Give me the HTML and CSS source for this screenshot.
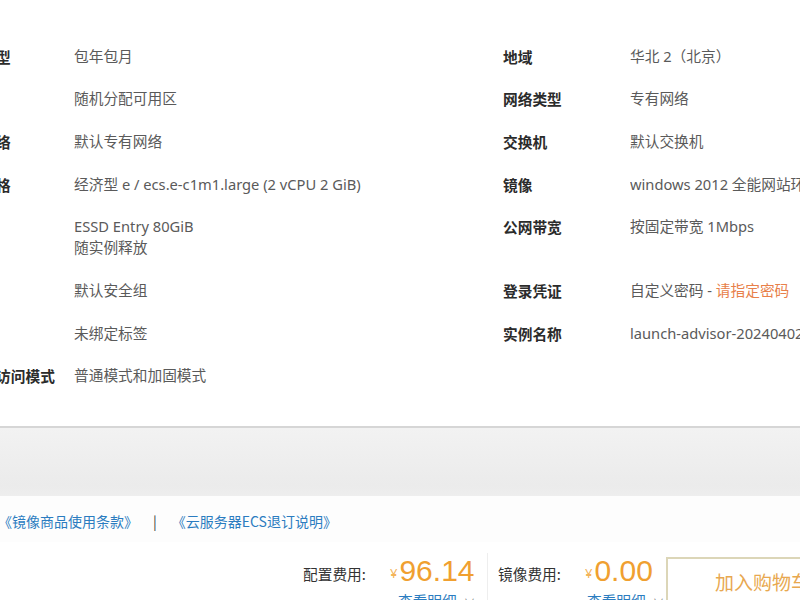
FILE: index.html
```html
<!DOCTYPE html>
<html lang="zh-CN">
<head>
<meta charset="utf-8">
<title>确认订单</title>
<link rel="stylesheet" href="styles.css">
</head>
<body>
<div class="page">
  <div class="info">
    <div class="label">付费类型</div><div class="value">包年包月</div>
    <div class="label">地域</div><div class="value">华北 2（北京）</div>

    <div class="label">可用区</div><div class="value">随机分配可用区</div>
    <div class="label">网络类型</div><div class="value">专有网络</div>

    <div class="label">专有网络</div><div class="value">默认专有网络</div>
    <div class="label">交换机</div><div class="value">默认交换机</div>

    <div class="label">实例规格</div><div class="value">经济型 e / ecs.e-c1m1.large (2 vCPU 2 GiB)</div>
    <div class="label">镜像</div><div class="value">windows 2012 全能网站环境(IIS/ASP/.NET/PHP)</div>

    <div class="label">系统盘</div><div class="value"><div class="line">ESSD Entry 80GiB</div><div class="line">随实例释放</div></div>
    <div class="label">公网带宽</div><div class="value">按固定带宽 1Mbps</div>

    <div class="label">安全组</div><div class="value">默认安全组</div>
    <div class="label">登录凭证</div><div class="value">自定义密码 - <span class="warn">请指定密码</span></div>

    <div class="label">标签</div><div class="value">未绑定标签</div>
    <div class="label">实例名称</div><div class="value">launch-advisor-20240402001</div>

    <div class="label">元数据访问模式</div><div class="value">普通模式和加固模式</div>
    <div class="label"></div><div class="value"></div>
  </div>

  <div class="band"></div>

  <div class="links">
    <a class="link">《镜像商品使用条款》</a>
    <span class="sep">|</span>
    <a class="link">《云服务器ECS退订说明》</a>
  </div>

  <div class="pricebar">
    <div class="fee-label">配置费用:</div>
    <div class="fee fee-cfg">
      <div class="amount"><span class="yen">¥</span>96.14</div>
      <div class="detail">查看明细 <span class="chev">∨</span></div>
    </div>
    <div class="divider"></div>
    <div class="fee-label">镜像费用:</div>
    <div class="fee fee-img">
      <div class="amount"><span class="yen">¥</span>0.00</div>
      <div class="detail">查看明细 <span class="chev">∨</span></div>
    </div>
    <div class="cart">加入购物车</div>
  </div>
</div>
</body>
</html>
```

FILE: styles.css
```css
html, body {
  margin: 0;
  padding: 0;
  background: #ffffff;
  overflow: hidden;
}

body {
  width: 800px;
  height: 600px;
  font-family: "Noto Sans", "Noto Sans CJK SC", sans-serif;
  font-size: 14.7px;
  color: #595959;
}

.page {
  width: 800px;
  height: 600px;
  overflow: hidden;
}

.info {
  display: grid;
  grid-template-columns: 122px 429px 127px 220px;
  grid-auto-rows: auto;
  align-content: start;
  row-gap: 21.7px;
  margin-left: -48px;
  padding-top: 45.5px;
  height: 426px;
  box-sizing: border-box;
  line-height: 21px;
}

.label {
  font-family: "Noto Sans CJK SC", sans-serif;
  font-weight: 700;
  color: #2b2b2b;
  white-space: nowrap;
  line-height: 21px;
}

.value {
  white-space: nowrap;
  overflow: hidden;
  color: #5a5a5a;
  line-height: 21px;
  font-family: "Noto Sans", "Noto Sans CJK SC", sans-serif;
}

.line {
  height: 21px;
  line-height: 21px;
}

.warn {
  color: #e8804a;
}

.band {
  border-top: 2px solid #d6d6d6;
  height: 68px;
  background: linear-gradient(#f2f2f2, #ebebeb 85%, #eeeeee);
}

.links {
  height: 42px;
  padding-top: 4px;
  display: flex;
  align-items: center;
  background: #fdfdfd;
  font-family: "Noto Sans CJK SC", sans-serif;
  font-size: 14px;
  color: #2b7cc0;
  white-space: nowrap;
  margin-left: -2px;
}

.link {
  color: #2b7cc0;
}

.sep {
  color: #3a3a3a;
  margin: 0 15px;
}

.pricebar {
  display: flex;
  align-items: flex-start;
  padding-left: 303px;
  padding-top: 15px;
  white-space: nowrap;
}

.pricebar > * {
  flex-shrink: 0;
}

.fee-label {
  font-family: "Noto Sans CJK SC", sans-serif;
  color: #333;
  font-size: 14.7px;
  line-height: 21px;
  margin-top: 6px;
  width: 87px;
}

.fee {
  display: flex;
  flex-direction: column;
  align-items: flex-end;
}

.fee-cfg {
  width: 97px;
}

.fee-img {
  width: 81px;
}

.amount {
  align-self: flex-start;
  font-family: "Liberation Sans", Arial, sans-serif;
  font-size: 30px;
  line-height: 30px;
  color: #f0a030;
  margin-top: -1px;
}

.yen {
  font-family: "Noto Sans", sans-serif;
  font-size: 13px;
  color: #f3b45a;
  margin-right: 2px;
  vertical-align: 3px;
}

.detail {
  font-family: "Noto Sans CJK SC", sans-serif;
  font-size: 14.7px;
  color: #2b7cc0;
  margin-top: 2px;
}

.fee-cfg .detail {
  margin-right: 12px;
}

.fee-img .detail {
  margin-right: 2px;
}

.chev {
  color: #777;
  font-size: 11px;
  margin-left: 4px;
}

.divider {
  width: 1px;
  height: 60px;
  background: #eeeeee;
  margin: -4px 10px 0 0;
}

.cart {
  box-sizing: border-box;
  width: 170px;
  height: 60px;
  border: 2px solid #dcd6b8;
  background: #fff;
  font-family: "Noto Sans CJK SC", sans-serif;
  font-size: 19px;
  color: #e8a850;
  padding: 9px 0 0 47px;
  line-height: 28px;
}
```
